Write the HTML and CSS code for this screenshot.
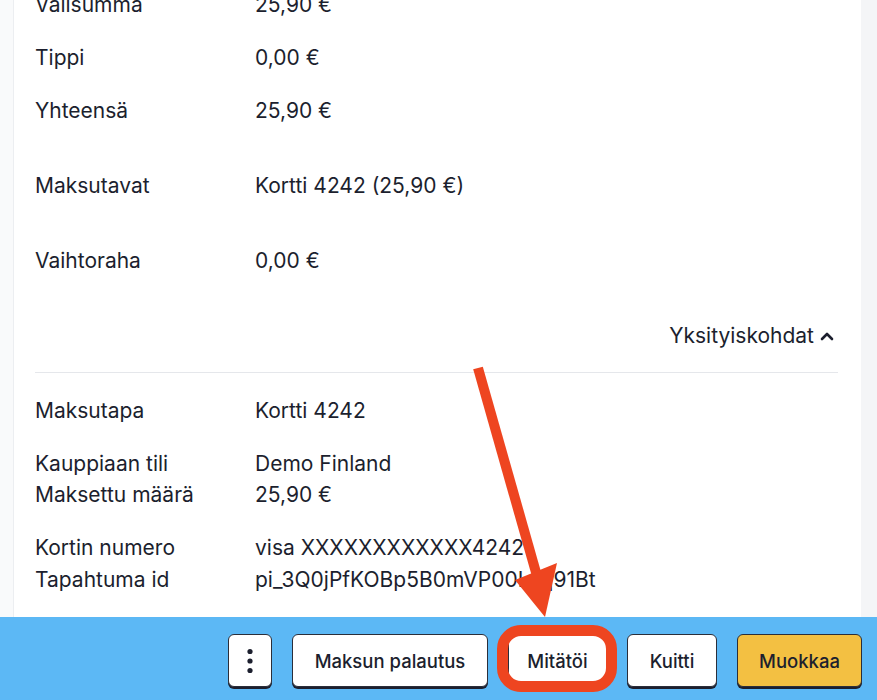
FILE: index.html
```html
<!DOCTYPE html>
<html lang="fi">
<head>
<meta charset="utf-8">
<title>Maksu</title>
<link rel="stylesheet" href="styles.css">
</head>
<body>
<div class="page">
  <div class="main">
    <div class="side-left"></div>
    <div class="card">
      <div class="content">
        <div class="row first"><span class="label">Välisumma</span><span class="value">25,90 €</span></div>
        <div class="row"><span class="label">Tippi</span><span class="value">0,00 €</span></div>
        <div class="row"><span class="label">Yhteensä</span><span class="value">25,90 €</span></div>
        <div class="row wide"><span class="label">Maksutavat</span><span class="value">Kortti 4242 (25,90 €)</span></div>
        <div class="row wide"><span class="label">Vaihtoraha</span><span class="value">0,00 €</span></div>
        <div class="toggle">
          <span>Yksityiskohdat</span>
          <svg class="chev" width="14" height="10" viewBox="0 0 14 10"><path d="M2 8 L7 3 L12 8" fill="none" stroke="#1c1f2e" stroke-width="2.6" stroke-linecap="round" stroke-linejoin="round"/></svg>
        </div>
        <div class="divider"></div>
        <div class="row"><span class="label">Maksutapa</span><span class="value">Kortti 4242</span></div>
        <div class="row"><span class="label">Kauppiaan tili</span><span class="value">Demo Finland</span></div>
        <div class="row tight"><span class="label">Maksettu määrä</span><span class="value">25,90 €</span></div>
        <div class="row"><span class="label">Kortin numero</span><span class="value">visa XXXXXXXXXXXX4242</span></div>
        <div class="row tight"><span class="label">Tapahtuma id</span><span class="value">pi_3Q0jPfKOBp5B0mVP00Lsq91Bt</span></div>
      </div>
    </div>
    <div class="side-right"></div>
  </div>
  <div class="footer">
    <button class="btn btn-dots" aria-label="Lisää">
      <svg width="8" height="26" viewBox="0 0 8 26"><circle cx="4" cy="3.5" r="2.6" fill="#1c1f2e"/><circle cx="4" cy="13" r="2.6" fill="#1c1f2e"/><circle cx="4" cy="22.5" r="2.6" fill="#1c1f2e"/></svg>
    </button>
    <button class="btn btn-refund">Maksun palautus</button>
    <button class="btn btn-void">Mitätöi<span class="ring"></span></button>
    <button class="btn btn-receipt">Kuitti</button>
    <button class="btn btn-primary">Muokkaa</button>
  </div>
  <svg class="arrow" width="877" height="700" viewBox="0 0 877 700">
    <line x1="478" y1="368" x2="537" y2="576" stroke="#ee4520" stroke-width="10"/>
    <polygon points="515,580 557,563 545,617" fill="#ee4520"/>
  </svg>
</div>
</body>
</html>
```
FILE: styles.css
```css
* { box-sizing: border-box; }
html, body { margin: 0; padding: 0; }
body {
  font-family: Inter, "Noto Sans", sans-serif;
  color: #1c1f2e;
  background: #ffffff;
}
.page {
  position: relative;
  width: 877px;
  height: 700px;
  display: flex;
  flex-direction: column;
  overflow: hidden;
}
.main {
  flex: 1;
  display: flex;
  overflow: hidden;
}
.side-left {
  width: 14px;
  background: #f9fafb;
  border-right: 1px solid #eceef1;
}
.side-right {
  width: 16px;
  background: #f4f5f7;
}
.card {
  flex: 1;
  background: #ffffff;
  padding: 0 23px 0 21px;
}
.content {
  font-size: 21px;
  line-height: 31.5px;
}
.row {
  display: grid;
  grid-template-columns: 220px 1fr;
  margin-top: 21.5px;
}
.row.first { margin-top: -11px; }
.row.wide { margin-top: 43.5px; }
.row.tight { margin-top: 0; }
.value { white-space: nowrap; }
.toggle {
  margin-top: 43px;
  display: flex;
  justify-content: flex-end;
  align-items: center;
  gap: 6px;
  padding-right: 4px;
}
.chev { display: block; margin-top: 1px; }
.divider {
  margin-top: 21px;
  height: 1px;
  background: #e5e7eb;
}
.divider + .row { margin-top: 21.5px; }
.footer {
  height: 83px;
  flex: none;
  background: #5cb8f5;
  display: flex;
  justify-content: flex-end;
  align-items: flex-start;
  gap: 20px;
  padding: 17px 15px 0 0;
}
.btn {
  position: relative;
  flex: none;
  height: 53px;
  padding: 0;
  background: #ffffff;
  border: 1px solid #2a2e3a;
  border-radius: 6px;
  box-shadow: 0 2px 0 #1c1f2e;
  font-family: Inter, "Noto Sans", sans-serif;
  font-size: 18.5px;
  font-weight: 500;
  color: #1c1f2e;
  display: flex;
  align-items: center;
  justify-content: center;
  white-space: nowrap;
}
.btn-dots { width: 44px; }
.btn-dots svg { display: block; }
.btn-refund { width: 196px; }
.btn-void { width: 99px; }
.btn-receipt { width: 90px; }
.btn-primary { width: 125px; background: #f3c042; }
.ring {
  position: absolute;
  top: -10px;
  bottom: -6px;
  left: -12px;
  right: -11px;
  border: 11px solid #ee4520;
  border-radius: 24px;
  pointer-events: none;
}
.arrow {
  position: absolute;
  left: 0;
  top: 0;
  pointer-events: none;
}
```
